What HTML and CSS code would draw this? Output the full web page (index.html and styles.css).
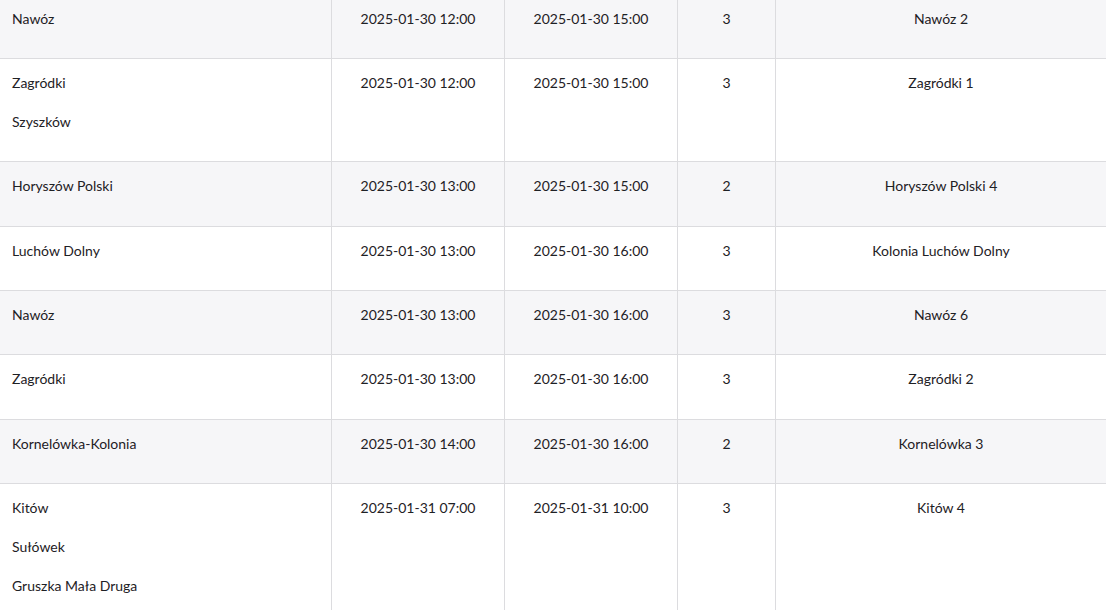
FILE: index.html
```html
<!DOCTYPE html>
<html lang="pl">
<head>
<meta charset="utf-8">
<title>Harmonogram</title>
<link rel="stylesheet" href="styles.css">
</head>
<body>
<div class="viewport">
<table class="schedule">
  <colgroup>
    <col class="c-places">
    <col class="c-date">
    <col class="c-date">
    <col class="c-num">
    <col class="c-station">
  </colgroup>
  <tbody>
    <tr>
      <td class="places"><div>Nawóz</div></td>
      <td>2025-01-30 12:00</td><td>2025-01-30 15:00</td><td>3</td><td>Nawóz 2</td>
    </tr>
    <tr>
      <td class="places"><div>Zagródki</div><div>Szyszków</div></td>
      <td>2025-01-30 12:00</td><td>2025-01-30 15:00</td><td>3</td><td>Zagródki 1</td>
    </tr>
    <tr>
      <td class="places"><div>Horyszów Polski</div></td>
      <td>2025-01-30 13:00</td><td>2025-01-30 15:00</td><td>2</td><td>Horyszów Polski 4</td>
    </tr>
    <tr>
      <td class="places"><div>Luchów Dolny</div></td>
      <td>2025-01-30 13:00</td><td>2025-01-30 16:00</td><td>3</td><td>Kolonia Luchów Dolny</td>
    </tr>
    <tr>
      <td class="places"><div>Nawóz</div></td>
      <td>2025-01-30 13:00</td><td>2025-01-30 16:00</td><td>3</td><td>Nawóz 6</td>
    </tr>
    <tr>
      <td class="places"><div>Zagródki</div></td>
      <td>2025-01-30 13:00</td><td>2025-01-30 16:00</td><td>3</td><td>Zagródki 2</td>
    </tr>
    <tr>
      <td class="places"><div>Kornelówka-Kolonia</div></td>
      <td>2025-01-30 14:00</td><td>2025-01-30 16:00</td><td>2</td><td>Kornelówka 3</td>
    </tr>
    <tr>
      <td class="places"><div>Kitów</div><div>Sułówek</div><div>Gruszka Mała Druga</div></td>
      <td>2025-01-31 07:00</td><td>2025-01-31 10:00</td><td>3</td><td>Kitów 4</td>
    </tr>
  </tbody>
</table>
</div>
</body>
</html>
```
FILE: styles.css
```css
html, body {
  margin: 0;
  padding: 0;
  background: #ffffff;
}
body {
  font-family: Lato, "Open Sans", "Liberation Sans", sans-serif;
  font-size: 14px;
  color: #1e2125;
  overflow: hidden;
}
.viewport {
  height: 610px;
  overflow: hidden;
}
.schedule {
  width: 1106px;
  table-layout: fixed;
  border-collapse: separate;
  border-spacing: 0;
  margin-top: -5.33px;
}
.c-places { width: 332px; }
.c-date { width: 173px; }
.c-num { width: 98px; }
.c-station { width: 330px; }

.schedule td {
  box-sizing: border-box;
  padding: 12px 12px 27.33px;
  line-height: 24px;
  vertical-align: top;
  text-align: center;
  border-bottom: 1px solid #dcdcdf;
  border-right: 1px solid #dcdcdf;
}
.schedule td:last-child {
  border-right: none;
}
.schedule tr:nth-child(odd) td {
  background: #f6f6f8;
}
.schedule td.places {
  text-align: left;
}
.places div + div {
  margin-top: 15px;
}
```
